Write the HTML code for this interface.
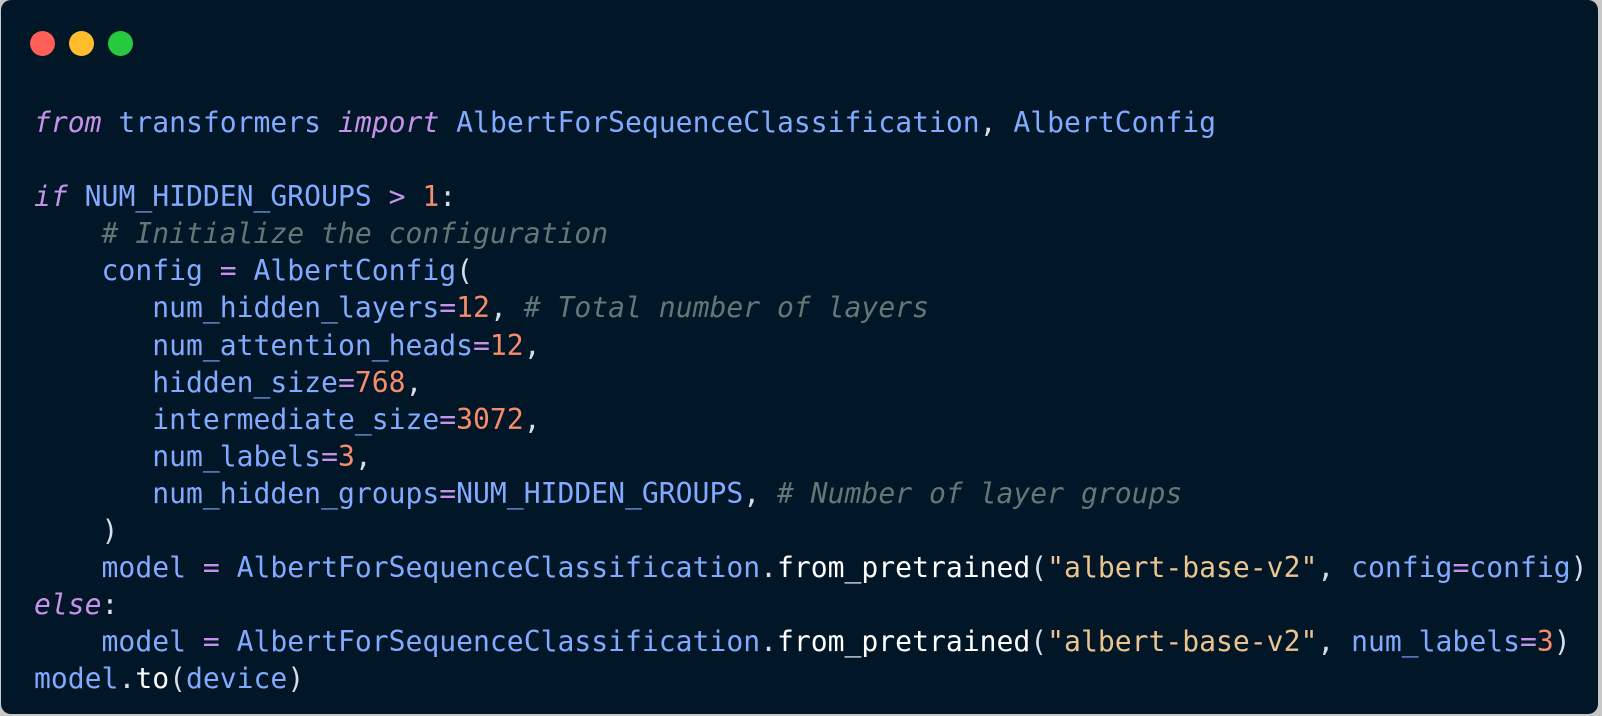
<!DOCTYPE html>
<html><head><meta charset="utf-8"><style>
html,body{margin:0;padding:0;width:1602px;height:716px;background:#c8c8c8;overflow:hidden}
.card{position:absolute;left:1px;top:0;width:1597px;height:714px;background:#011627;border-radius:10px}
.dot{position:absolute;top:31px;width:25px;height:25px;border-radius:50%}
pre{position:absolute;left:33px;top:104px;margin:0;font-family:"DejaVu Sans Mono","Liberation Mono",monospace;font-size:28.05px;line-height:37.1px;color:#82aaff}
.k{color:#c792ea;font-style:italic}
.o{color:#c792ea}
.n{color:#f78c6c}
.s{color:#ecc48d}
.c{color:#637777;font-style:italic}
.p{color:#d6deeb}
.w{color:#ffffff}
</style></head><body>
<div class="card">
<div class="dot" style="left:29px;background:#ff5f56"></div>
<div class="dot" style="left:68px;background:#ffbd2e"></div>
<div class="dot" style="left:107px;background:#27c93f"></div>
<pre><span class="k">from</span> transformers <span class="k">import</span> AlbertForSequenceClassification<span class="p">,</span> AlbertConfig

<span class="k">if</span> NUM_HIDDEN_GROUPS <span class="o">&gt;</span> <span class="n">1</span><span class="p">:</span>
    <span class="c"># Initialize the configuration</span>
    config <span class="o">=</span> AlbertConfig<span class="p">(</span>
       num_hidden_layers<span class="o">=</span><span class="n">12</span><span class="p">,</span> <span class="c"># Total number of layers</span>
       num_attention_heads<span class="o">=</span><span class="n">12</span><span class="p">,</span>
       hidden_size<span class="o">=</span><span class="n">768</span><span class="p">,</span>
       intermediate_size<span class="o">=</span><span class="n">3072</span><span class="p">,</span>
       num_labels<span class="o">=</span><span class="n">3</span><span class="p">,</span>
       num_hidden_groups<span class="o">=</span>NUM_HIDDEN_GROUPS<span class="p">,</span> <span class="c"># Number of layer groups</span>
    <span class="p">)</span>
    model <span class="o">=</span> AlbertForSequenceClassification<span class="p">.</span><span class="w">from_pretrained</span><span class="p">(</span><span class="s">"albert-base-v2"</span><span class="p">,</span> config<span class="o">=</span>config<span class="p">)</span>
<span class="k">else</span><span class="p">:</span>
    model <span class="o">=</span> AlbertForSequenceClassification<span class="p">.</span><span class="w">from_pretrained</span><span class="p">(</span><span class="s">"albert-base-v2"</span><span class="p">,</span> num_labels<span class="o">=</span><span class="n">3</span><span class="p">)</span>
model<span class="p">.</span><span class="w">to</span><span class="p">(</span>device<span class="p">)</span></pre>
</div>
</body></html>
